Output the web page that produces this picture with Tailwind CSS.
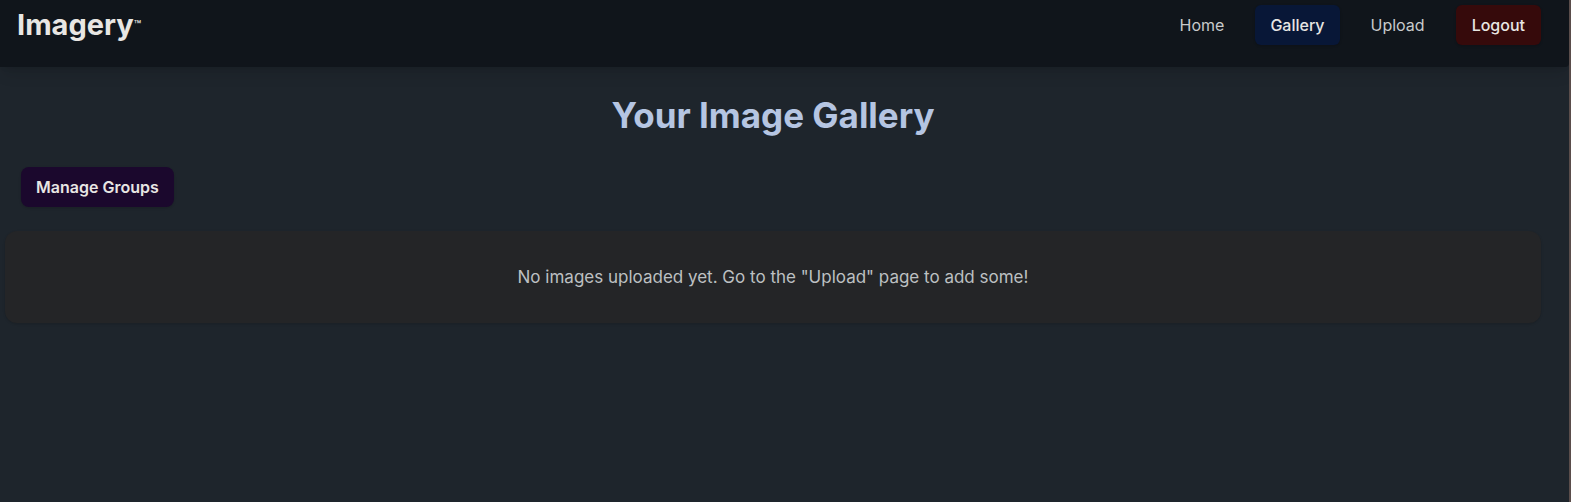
<!DOCTYPE html>
<html lang="en">
<head>
<meta charset="utf-8">
<meta name="viewport" content="width=device-width, initial-scale=1">
<title>Imagery</title>
<script src="https://cdn.jsdelivr.net/npm/@tailwindcss/browser@4"></script>
</head>
<body class="flex min-h-screen flex-col border-r-2 border-[#5a4d4b] bg-[#1e252c] font-['Inter',sans-serif] text-[#e8e6e3]">
  <header class="rounded-br-sm bg-[#10151b] pt-[5px] pr-7 pb-[22px] pl-4 shadow-lg">
    <nav class="flex items-center justify-between">
      <a href="#" class="flex items-center pl-px text-[29px] leading-10 font-bold">Imagery<span class="text-xs font-medium">™</span></a>
      <div class="flex items-center gap-4 text-[#c8cacb]">
        <a href="#" class="rounded-md px-[15px] py-2">Home</a>
        <a href="#" aria-current="page" class="rounded-md bg-[#081737] px-[15px] py-2 font-medium text-[#e8e6e3] shadow-sm">Gallery</a>
        <a href="#" class="rounded-md px-[15px] py-2">Upload</a>
        <button type="button" class="rounded-md bg-[#360a0b] px-4 py-2 font-medium text-[#e8e6e3] shadow-sm">Logout</button>
      </div>
    </nav>
  </header>
  <main class="pt-7 pr-7 pl-[5px]">
    <h1 class="mb-8 text-center text-[35px] leading-10 font-bold text-[#b5c5e2]">Your Image Gallery</h1>
    <div class="mb-6 px-4">
      <button type="button" class="rounded-lg bg-[#1b082d] px-[15px] py-2 font-semibold shadow-sm">Manage Groups</button>
    </div>
    <section class="rounded-xl bg-[#242527] p-8 text-center shadow-sm">
      <p class="text-[17px] leading-7 text-[#bdc0c2]">No images uploaded yet. Go to the "Upload" page to add some!</p>
    </section>
  </main>
</body>
</html>
